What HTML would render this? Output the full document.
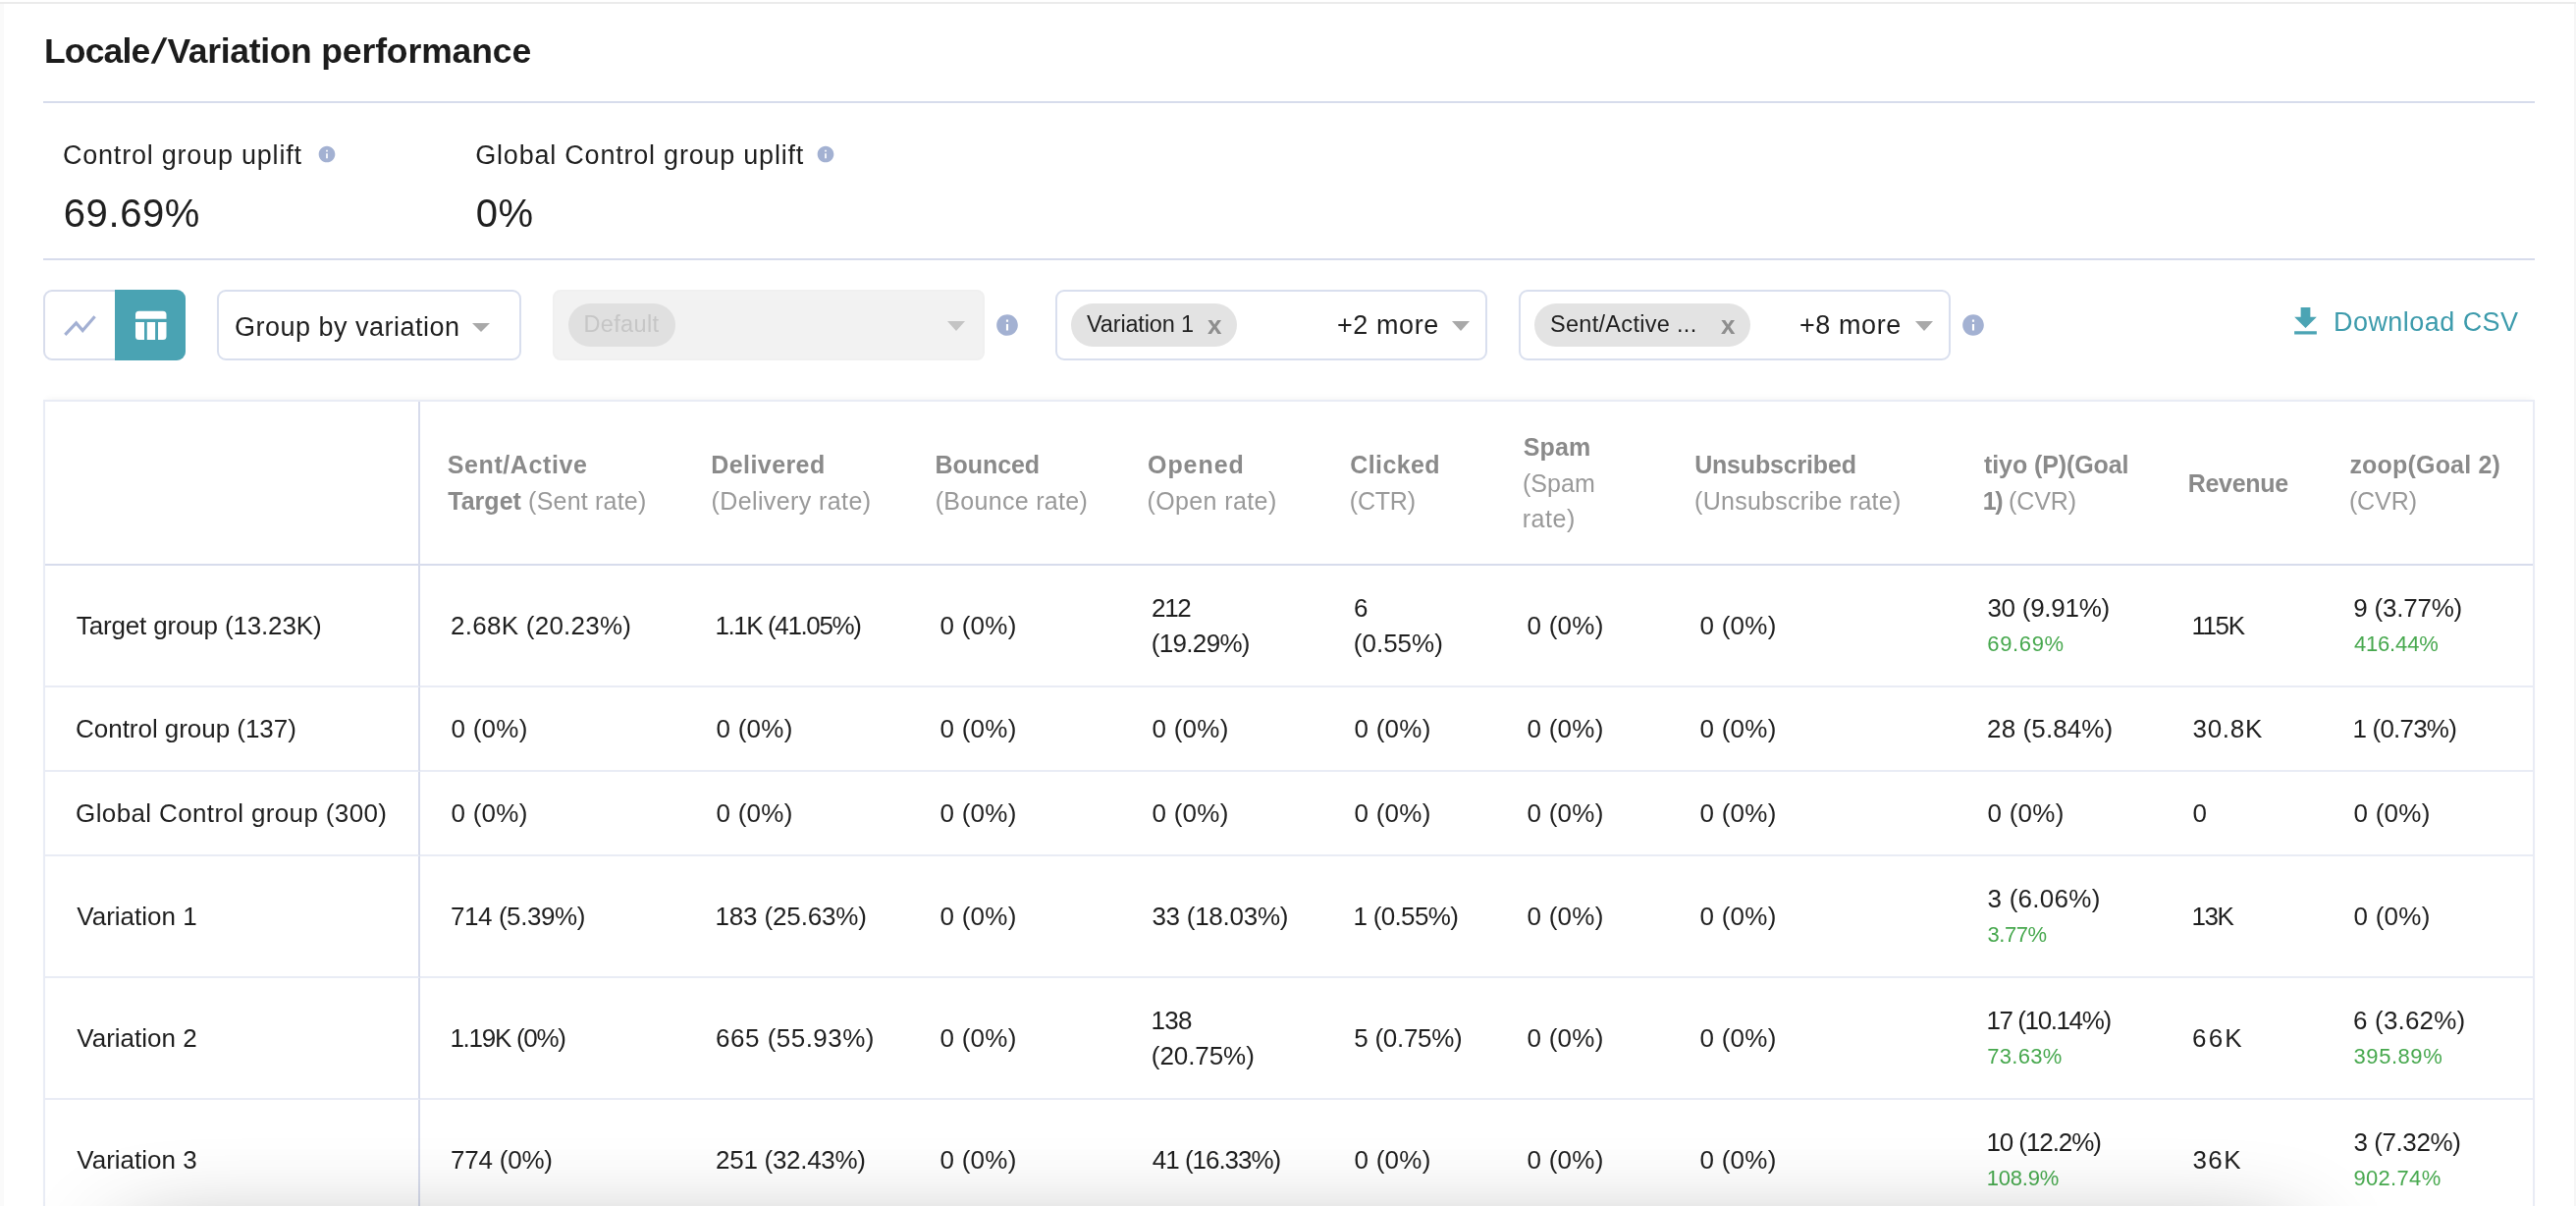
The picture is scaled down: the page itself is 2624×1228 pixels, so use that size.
<!DOCTYPE html>
<html lang="en">
<head>
<meta charset="utf-8">
<title>Locale/Variation performance</title>
<style>
  html, body { margin: 0; padding: 0; }
  body {
    width: 2624px; height: 1228px; overflow: hidden; position: relative;
    background: #fff;
    font-family: "Liberation Sans", sans-serif;
    color: #1f1f1f;
    -webkit-font-smoothing: antialiased;
  }
  .page { position: absolute; left: 0; top: 0; width: 2624px; height: 1228px; overflow: hidden; will-change: transform; background: #fff; }
  .abs { position: absolute; white-space: nowrap; }
  /* page frame */
  .frame-top { left: 0; top: 2px; width: 2624px; height: 2px; background: #ebebeb; }
  .frame-left { left: 0; top: 4px; width: 4px; height: 1224px; background: #fafafa; }
  .frame-right { left: 2622px; top: 4px; width: 2px; height: 1224px; background: #f6f6f6; }

  h1.title { margin: 0; left: 45px; top: 29.500px; font-size: 35.500px; line-height: 44px; font-weight: 700; color: #1c1c1c; letter-spacing: -0.100px; }
  .rule { left: 44px; width: 2538px; height: 2px; background: #d7dcec; }

  .stat-label { font-size: 27px; line-height: 34px; color: #1f1f1f; letter-spacing: 0.780px; }
  .stat-value { font-size: 40px; line-height: 48px; color: #1f1f1f; letter-spacing: 0.600px; }
  .info { display: block; }

  /* toolbar */
  .toggle { left: 44px; top: 295px; width: 145px; height: 72px; box-sizing: border-box; border: 2px solid #d8ddec; border-radius: 9px; background: #fff; }
  .toggle .on { position: absolute; left: 71px; top: -2px; width: 72px; height: 72px; background: #4aa3b3; border-radius: 0 9px 9px 0; }
  .select { top: 295px; height: 72px; box-sizing: border-box; border: 2px solid #d9dfee; border-radius: 9px; background: #fff; }
  .select.disabled { background: #f2f2f2; border-color: #f0f0f0; border-radius: 8px; }
  .pill { position: absolute; top: 12px; height: 44px; border-radius: 22px; background: #e3e3e3; }
  .pill .txt { position: absolute; top: -1.400px; font-size: 23.500px; line-height: 44px; color: #1f1f1f; white-space: nowrap; }
  .pill .x { position: absolute; top: 1.600px; font-size: 26px; line-height: 41px; font-weight: 700; color: #8e8e8e; }
  .sel-text { position: absolute; font-size: 27px; line-height: 34px; color: #1f1f1f; white-space: nowrap; letter-spacing: 0.580px; }
  .caret { position: absolute; width: 0; height: 0; border-left: 9.5px solid transparent; border-right: 9.5px solid transparent; border-top: 10px solid #a9a9a9; }
  .download { left: 2329px; top: 300px; color: #3d9bac; font-size: 27px; line-height: 40px; letter-spacing: 0.450px; text-decoration: none; }

  /* table */
  table.perf { left: 44px; top: 407px; width: 2538px; border-collapse: separate; border-spacing: 0; table-layout: fixed; border: 2px solid #e9ecf5; box-sizing: border-box; white-space: normal; box-shadow: 0 -5px 6px -3px rgba(0,0,0,0.035); }
  table.perf th, table.perf td { padding: 0; margin: 0; text-align: left; vertical-align: middle; box-sizing: border-box; white-space: nowrap; overflow: visible; }
  table.perf th { height: 167px; border-bottom: 2px solid #d7dcec; font-size: 25px; line-height: 36.800px; font-weight: 400; color: #999; padding-left: 28px; padding-top: 1px; }
  table.perf th b { font-weight: 700; color: #8a8a8a; }
  table.perf td { border-bottom: 2px solid #e9ecf5; font-size: 26px; line-height: 36.400px; color: #1f1f1f; padding-left: 32px; }
  table.perf th:first-child, table.perf td:first-child { border-right: 2px solid #d7dcec; }
  table.perf tr.tall td { height: 124px; }
  table.perf tr.short td { height: 86px; }
  .up { display: block; position: relative; top: 1px; font-size: 22px; line-height: 36.400px; color: #47a84e; }
  .shadow { left: 130px; top: 1270px; width: 2205px; height: 100px; background: #888; box-shadow: 0 0 100px 0 rgba(0,0,0,0.45); border-radius: 10px; }
</style>
</head>
<body>
<main class="page">
<div class="abs frame-top"></div>
<div class="abs frame-left"></div>
<div class="abs frame-right"></div>

<h1 class="abs title"><span style="letter-spacing:-0.850px">Locale</span><span style="display:inline-block; margin:0 3.300px 0 5px; transform:skewX(-16deg)">/</span><span style="letter-spacing:-0.330px">Variation</span> performance</h1>
<div class="abs rule" style="top:103px"></div>

<section>
  <div class="abs stat-label" id="lbl1" style="left:64px; top:141px;">Control group uplift</div>
  <svg class="abs info" id="inf1" style="left:322.600px; top:147px;" width="20" height="20" viewBox="0 0 24 24"><path fill="#a3b1d2" d="M12 2C6.48 2 2 6.48 2 12s4.480 10 10 10 10-4.480 10-10S17.520 2 12 2zm1 15h-2v-6h2v6zm0-8h-2V7h2v2z"/></svg>
  <div class="abs stat-value" id="val1" style="left:64.750px; top:193px;">69.69%</div>

  <div class="abs stat-label" id="lbl2" style="left:484.300px; top:141px;">Global Control group uplift</div>
  <svg class="abs info" id="inf2" style="left:831px; top:147px;" width="20" height="20" viewBox="0 0 24 24"><path fill="#a3b1d2" d="M12 2C6.48 2 2 6.48 2 12s4.480 10 10 10 10-4.480 10-10S17.520 2 12 2zm1 15h-2v-6h2v6zm0-8h-2V7h2v2z"/></svg>
  <div class="abs stat-value" id="val2" style="left:484.750px; top:193px;">0%</div>
</section>
<div class="abs rule" style="top:263px"></div>
<nav>
  <div class="abs toggle"><div class="on"></div></div>
  <svg class="abs" id="ico-line" style="left:60px; top:316px;" width="44" height="32" viewBox="60 316 44 32"><polyline fill="none" stroke="#a3b0d3" stroke-width="3.1" stroke-linejoin="miter" points="66.3,340.9 77.6,328.9 84.2,336.6 96.6,322.2"/></svg>
  <svg class="abs" id="ico-table" style="left:136px; top:314px;" width="36" height="36" viewBox="136 314 36 36"><path fill="#fff" d="M141.500,316.700 H166 a3.500,3.500 0 0 1 3.500,3.500 V324.800 H138 V320.200 a3.500,3.500 0 0 1 3.500,-3.500 Z M138,328 H147 V346.100 H141.500 a3.500,3.500 0 0 1 -3.500,-3.500 Z M149.800,328 H158.100 V346.100 H149.800 Z M161,328 H169.500 V342.600 a3.500,3.500 0 0 1 -3.500,3.500 H161 Z"/></svg>

  <div class="abs select" style="left:221px; width:310px;">
    <span class="sel-text" id="t-group" style="left:16px; top:19px; letter-spacing:0.490px;">Group by variation</span>
    <span class="caret" style="left:258px; top:32px; border-left-width:9px; border-right-width:9px; border-top-width:9px;"></span>
  </div>

  <div class="abs select disabled" style="left:563px; width:440px;">
    <span class="pill" style="left:14px; width:109px; background:#e0e0e0;"><span class="txt" id="t-default" style="left:15.500px; color:#c6c6c6; letter-spacing:0.350px;">Default</span></span>
    <span class="caret" style="left:400px; top:30px; border-top-color:#c4c4c4;"></span>
  </div>
  <svg class="abs info" style="left:1012.500px; top:318px;" width="26" height="26" viewBox="0 0 24 24"><path fill="#a3b1d2" d="M12 2C6.48 2 2 6.48 2 12s4.480 10 10 10 10-4.480 10-10S17.520 2 12 2zm1 15h-2v-6h2v6zm0-8h-2V7h2v2z"/></svg>

  <div class="abs select" style="left:1075px; width:440px;">
    <span class="pill" style="left:14px; width:169px;"><span class="txt" id="t-var1" style="left:16px; letter-spacing:-0.150px;">Variation 1</span><span class="x" style="left:139px;">x</span></span>
    <span class="sel-text" id="t-more2" style="left:285px; top:17px;">+2 more</span>
    <span class="caret" style="left:402px; top:30px;"></span>
  </div>

  <div class="abs select" style="left:1547px; width:440px;">
    <span class="pill" style="left:14px; width:220px;"><span class="txt" id="t-sent" style="left:16px; letter-spacing:0.300px;">Sent/Active ...</span><span class="x" style="left:190px;">x</span></span>
    <span class="sel-text" id="t-more8" style="left:284px; top:17px;">+8 more</span>
    <span class="caret" style="left:402px; top:30px;"></span>
  </div>
  <svg class="abs info" style="left:1996.500px; top:318px;" width="26" height="26" viewBox="0 0 24 24"><path fill="#a3b1d2" d="M12 2C6.48 2 2 6.48 2 12s4.480 10 10 10 10-4.480 10-10S17.520 2 12 2zm1 15h-2v-6h2v6zm0-8h-2V7h2v2z"/></svg>

  <svg class="abs" id="ico-dl" style="left:2329px; top:308px;" width="39" height="39" viewBox="0 0 24 24"><path fill="#4ba4b4" d="M19 9h-4V3H9v6H5l7 7 7-7zM5 18v2h14v-2H5z"/></svg>
  <a class="abs download" id="t-dl" style="left:2377px; top:308px;">Download CSV</a>
</nav>
<!-- TABLE-START -->
<table class="abs perf">
  <colgroup><col style="width:382px"><col style="width:270px"><col style="width:228px"><col style="width:216px"><col style="width:206px"><col style="width:176px"><col style="width:176px"><col style="width:293px"><col style="width:209px"><col style="width:164px"><col style="width:214px"></colgroup>
  <thead><tr>
    <th></th>
    <th><b style="letter-spacing:0.593px;margin-left:-0.22px;">Sent/Active</b><br><b style="letter-spacing:0.032px;margin-left:0.21px;">Target</b><span style="letter-spacing:0.210px;"> (Sent rate)</span></th>
    <th><b style="letter-spacing:0.409px;margin-left:-1.68px;">Delivered</b><br><span style="letter-spacing:0.400px;margin-left:-1.54px;">(Delivery rate)</span></th>
    <th><b style="letter-spacing:-0.068px;margin-left:-1.48px;">Bounced</b><br><span style="letter-spacing:0.303px;margin-left:-1.34px;">(Bounce rate)</span></th>
    <th><b style="letter-spacing:0.943px;margin-left:-1.01px;">Opened</b><br><span style="letter-spacing:0.394px;margin-left:-1.54px;">(Open rate)</span></th>
    <th><b style="letter-spacing:0.392px;margin-left:-0.71px;">Clicked</b><br><span style="letter-spacing:-0.188px;margin-left:-1.24px;">(CTR)</span></th>
    <th><b style="letter-spacing:0.161px;margin-left:-0.32px;">Spam</b><br><span style="letter-spacing:0.067px;margin-left:-1.14px;">(Spam</span><br><span style="letter-spacing:0.532px;margin-left:-1.28px;">rate)</span></th>
    <th><b style="letter-spacing:-0.169px;margin-left:-1.89px;">Unsubscribed</b><br><span style="letter-spacing:0.274px;margin-left:-1.94px;">(Unsubscribe rate)</span></th>
    <th><b style="letter-spacing:-0.091px;margin-left:0.01px;">tiyo (P)(Goal</b><br><b style="letter-spacing:-1.375px;margin-left:-1.29px;">1)</b><span style="letter-spacing:-0.112px;"> (CVR)</span></th>
    <th><b style="letter-spacing:-0.272px;margin-left:-1.38px;">Revenue</b></th>
    <th><b style="letter-spacing:0.197px;margin-left:-0.61px;">zoop(Goal 2)</b><br><span style="letter-spacing:-0.087px;margin-left:-1.14px;">(CVR)</span></th>
  </tr></thead>
  <tbody>
  <tr class="tall">
    <td><span style="margin-left:-0.20px;letter-spacing:-0.160px;">Target group (13.23K)</span></td>
    <td><span style="margin-left:-0.90px;letter-spacing:0.250px;">2.68K (20.23%)</span></td>
    <td><span style="margin-left:-1.60px;letter-spacing:-1.400px;">1.1K (41.05%)</span></td>
    <td><span style="margin-left:-0.60px;letter-spacing:0.270px;">0 (0%)</span></td>
    <td><span style="margin-left:-0.90px;letter-spacing:-1.375px;">212</span><br><span style="margin-left:-1.20px;letter-spacing:-0.686px;">(19.29%)</span></td>
    <td><span style="margin-left:-0.90px;">6</span><br><span style="margin-left:-1.20px;">(0.55%)</span></td>
    <td><span style="margin-left:-0.60px;letter-spacing:0.270px;">0 (0%)</span></td>
    <td><span style="margin-left:-0.60px;letter-spacing:0.270px;">0 (0%)</span></td>
    <td><span style="margin-left:-0.60px;letter-spacing:-0.261px;">30 (9.91%)</span><span class="up" style="margin-left:-0.70px;letter-spacing:0.635px;">69.69%</span></td>
    <td><span style="margin-left:-1.60px;letter-spacing:-1.400px;">115K</span></td>
    <td><span style="margin-left:-0.80px;letter-spacing:-0.212px;">9 (3.77%)</span><span class="up" style="margin-left:-0.11px;letter-spacing:-0.158px;">416.44%</span></td>
  </tr>
  <tr class="short">
    <td><span style="margin-left:-0.90px;letter-spacing:-0.042px;">Control group (137)</span></td>
    <td><span style="margin-left:-0.60px;letter-spacing:0.270px;">0 (0%)</span></td>
    <td><span style="margin-left:-0.60px;letter-spacing:0.270px;">0 (0%)</span></td>
    <td><span style="margin-left:-0.60px;letter-spacing:0.270px;">0 (0%)</span></td>
    <td><span style="margin-left:-0.60px;letter-spacing:0.270px;">0 (0%)</span></td>
    <td><span style="margin-left:-0.60px;letter-spacing:0.270px;">0 (0%)</span></td>
    <td><span style="margin-left:-0.60px;letter-spacing:0.270px;">0 (0%)</span></td>
    <td><span style="margin-left:-0.60px;letter-spacing:0.270px;">0 (0%)</span></td>
    <td><span style="margin-left:-0.90px;letter-spacing:0.106px;">28 (5.84%)</span></td>
    <td><span style="margin-left:-0.60px;letter-spacing:0.762px;">30.8K</span></td>
    <td><span style="margin-left:-1.60px;letter-spacing:-0.787px;">1 (0.73%)</span></td>
  </tr>
  <tr class="short">
    <td><span style="margin-left:-0.90px;letter-spacing:0.362px;">Global Control group (300)</span></td>
    <td><span style="margin-left:-0.60px;letter-spacing:0.270px;">0 (0%)</span></td>
    <td><span style="margin-left:-0.60px;letter-spacing:0.270px;">0 (0%)</span></td>
    <td><span style="margin-left:-0.60px;letter-spacing:0.270px;">0 (0%)</span></td>
    <td><span style="margin-left:-0.60px;letter-spacing:0.270px;">0 (0%)</span></td>
    <td><span style="margin-left:-0.60px;letter-spacing:0.270px;">0 (0%)</span></td>
    <td><span style="margin-left:-0.60px;letter-spacing:0.270px;">0 (0%)</span></td>
    <td><span style="margin-left:-0.60px;letter-spacing:0.270px;">0 (0%)</span></td>
    <td><span style="margin-left:-0.60px;letter-spacing:0.270px;">0 (0%)</span></td>
    <td><span style="margin-left:-0.60px;">0</span></td>
    <td><span style="margin-left:-0.60px;letter-spacing:0.270px;">0 (0%)</span></td>
  </tr>
  <tr class="tall">
    <td><span style="margin-left:0.30px;">Variation 1</span></td>
    <td><span style="margin-left:-0.95px;letter-spacing:-0.440px;">714 (5.39%)</span></td>
    <td><span style="margin-left:-1.60px;letter-spacing:-0.136px;">183 (25.63%)</span></td>
    <td><span style="margin-left:-0.60px;letter-spacing:0.270px;">0 (0%)</span></td>
    <td><span style="margin-left:-0.60px;letter-spacing:-0.265px;">33 (18.03%)</span></td>
    <td><span style="margin-left:-1.60px;letter-spacing:-0.662px;">1 (0.55%)</span></td>
    <td><span style="margin-left:-0.60px;letter-spacing:0.270px;">0 (0%)</span></td>
    <td><span style="margin-left:-0.60px;letter-spacing:0.270px;">0 (0%)</span></td>
    <td><span style="margin-left:-0.60px;letter-spacing:0.275px;">3 (6.06%)</span><span class="up" style="margin-left:-0.45px;letter-spacing:-0.463px;">3.77%</span></td>
    <td><span style="margin-left:-1.60px;letter-spacing:-1.400px;">13K</span></td>
    <td><span style="margin-left:-0.60px;letter-spacing:0.270px;">0 (0%)</span></td>
  </tr>
  <tr class="tall">
    <td><span style="margin-left:0.30px;">Variation 2</span></td>
    <td><span style="margin-left:-1.60px;letter-spacing:-1.272px;">1.19K (0%)</span></td>
    <td><span style="margin-left:-0.90px;letter-spacing:0.482px;">665 (55.93%)</span></td>
    <td><span style="margin-left:-0.60px;letter-spacing:0.270px;">0 (0%)</span></td>
    <td><span style="margin-left:-1.60px;letter-spacing:-0.625px;">138</span><br><span style="margin-left:-1.20px;letter-spacing:-0.071px;">(20.75%)</span></td>
    <td><span style="margin-left:-0.65px;letter-spacing:-0.294px;">5 (0.75%)</span></td>
    <td><span style="margin-left:-0.60px;letter-spacing:0.270px;">0 (0%)</span></td>
    <td><span style="margin-left:-0.60px;letter-spacing:0.270px;">0 (0%)</span></td>
    <td><span style="margin-left:-1.60px;letter-spacing:-1.400px;">17 (10.14%)</span><span class="up" style="margin-left:-0.74px;letter-spacing:0.283px;">73.63%</span></td>
    <td><span style="margin-left:-0.90px;letter-spacing:2.075px;">66K</span></td>
    <td><span style="margin-left:-0.90px;letter-spacing:0.162px;">6 (3.62%)</span><span class="up" style="margin-left:-0.45px;letter-spacing:0.549px;">395.89%</span></td>
  </tr>
  <tr class="tall">
    <td><span style="margin-left:0.30px;">Variation 3</span></td>
    <td><span style="margin-left:-0.95px;letter-spacing:-0.221px;">774 (0%)</span></td>
    <td><span style="margin-left:-0.90px;letter-spacing:-0.291px;">251 (32.43%)</span></td>
    <td><span style="margin-left:-0.60px;letter-spacing:0.270px;">0 (0%)</span></td>
    <td><span style="margin-left:-0.20px;letter-spacing:-1.025px;">41 (16.33%)</span></td>
    <td><span style="margin-left:-0.60px;letter-spacing:0.270px;">0 (0%)</span></td>
    <td><span style="margin-left:-0.60px;letter-spacing:0.270px;">0 (0%)</span></td>
    <td><span style="margin-left:-0.60px;letter-spacing:0.270px;">0 (0%)</span></td>
    <td><span style="margin-left:-1.60px;letter-spacing:-1.083px;">10 (12.2%)</span><span class="up" style="margin-left:-1.29px;letter-spacing:-0.207px;">108.9%</span></td>
    <td><span style="margin-left:-0.60px;letter-spacing:1.475px;">36K</span></td>
    <td><span style="margin-left:-0.60px;letter-spacing:-0.412px;">3 (7.32%)</span><span class="up" style="margin-left:-0.62px;letter-spacing:0.327px;">902.74%</span></td>
  </tr>
  </tbody>
</table>
<!-- TABLE-END -->

<div class="abs shadow"></div>
</main>
</body>
</html>
